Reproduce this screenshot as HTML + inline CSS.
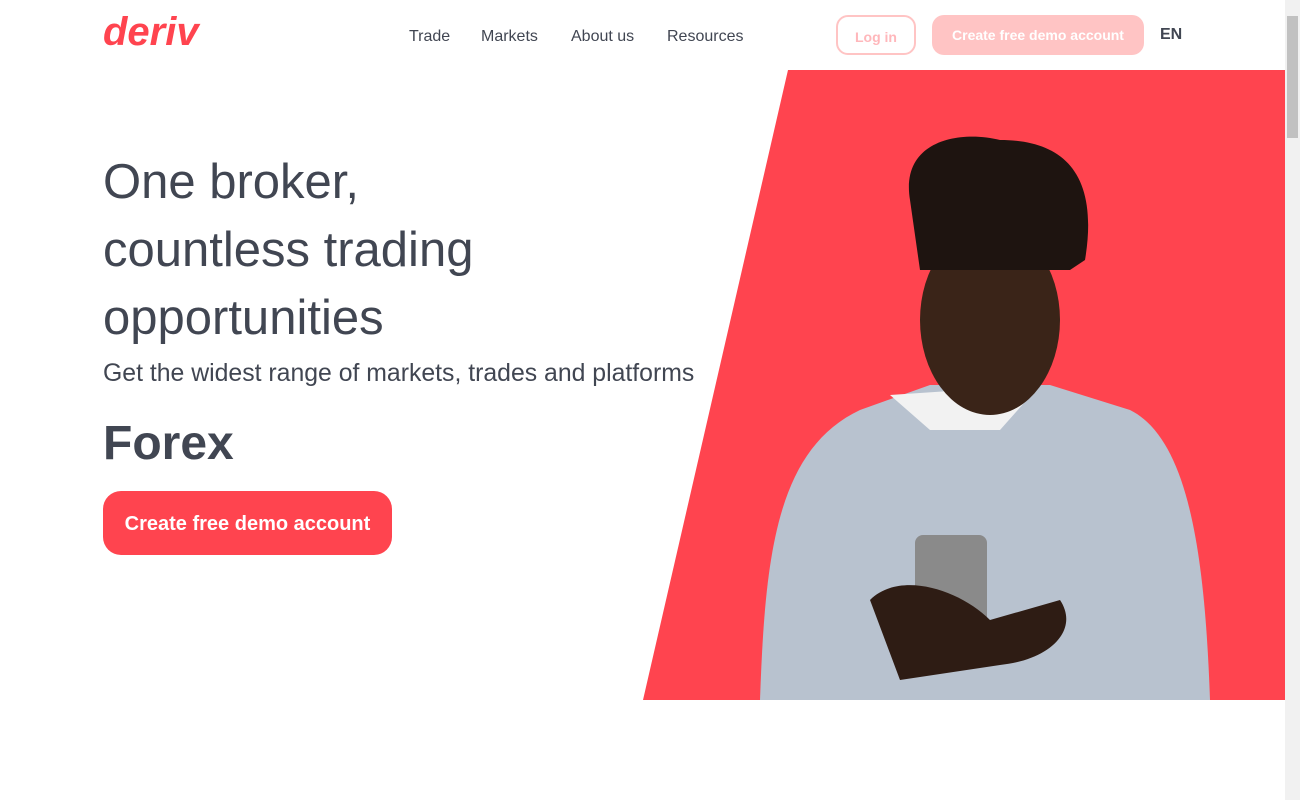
<!DOCTYPE html>
<html><head><meta charset="utf-8"><style>
body{margin:0;width:1300px;height:800px;overflow:hidden;background:#fff;font-family:"Liberation Sans",sans-serif;color:#414652;position:relative}
.abs{position:absolute}
.logo{left:103px;top:10px;font-size:40px;font-weight:bold;font-style:italic;color:#ff444f;letter-spacing:0px}
.nav{top:28px;font-size:16px;color:#414652}
.login{left:836px;top:15px;width:76px;height:36px;border:2px solid #ffc4c4;border-radius:12px;color:#ffb7bb;font-weight:bold;font-size:14px;text-align:center;line-height:40px}
.cta{left:932px;top:15px;width:212px;height:40px;background:#ffc4c4;border-radius:12px;color:#fff;font-weight:bold;font-size:14px;text-align:center;line-height:41px}
.en{left:1160px;top:26px;font-weight:bold;font-size:16px}
h1{position:absolute;left:103px;top:148px;margin:0;font-weight:normal;font-size:49px;line-height:68px;color:#414652}
.sub{left:103px;top:360px;font-size:24.8px}
.fx{left:103px;top:416px;font-size:48px;font-weight:bold}
.btn{left:103px;top:491px;width:289px;height:64px;background:#ff444f;border-radius:18px;color:#fff;font-weight:bold;font-size:20px;text-align:center;line-height:66px}
.sb{left:1285px;top:0;width:15px;height:800px;background:#f1f1f1}
</style></head><body>
<div class="abs logo">deriv</div>
<div class="abs nav" style="left:409px">Trade</div>
<div class="abs nav" style="left:481px">Markets</div>
<div class="abs nav" style="left:571px">About us</div>
<div class="abs nav" style="left:667px">Resources</div>
<div class="abs login">Log in</div>
<div class="abs cta">Create free demo account</div>
<div class="abs en">EN</div>
<svg class="abs" style="left:0;top:0" width="1300" height="800">
<polygon points="788,70 1285,70 1285,700 643,700" fill="#ff444f"/>
<path d="M760,700 C765,560 775,450 860,410 L930,385 L1050,385 L1130,410 C1190,440 1205,560 1210,700 Z" fill="#b8c2cf"/>
<path d="M890,395 L1040,385 L1000,430 L930,430 Z" fill="#f2f2f2"/>
<ellipse cx="990" cy="320" rx="70" ry="95" fill="#3a2418"/>
<path d="M910,200 C900,140 960,130 1000,140 C1060,140 1100,170 1085,260 L1070,270 L920,270 Z" fill="#1e1410"/>
<rect x="915" y="535" width="72" height="110" rx="8" fill="#8a8a8a"/>
<path d="M870,600 C900,570 960,590 990,620 L1060,600 C1080,630 1050,660 1000,665 L900,680 Z" fill="#2e1c14"/>
</svg>
<h1>One broker,<br>countless trading<br>opportunities</h1>
<div class="abs sub">Get the widest range of markets, trades and platforms</div>
<div class="abs fx">Forex</div>
<div class="abs btn">Create free demo account</div>
<div class="abs sb"><div class="abs" style="left:2px;top:16px;width:11px;height:122px;background:#c1c1c1"></div></div>
</body></html>
